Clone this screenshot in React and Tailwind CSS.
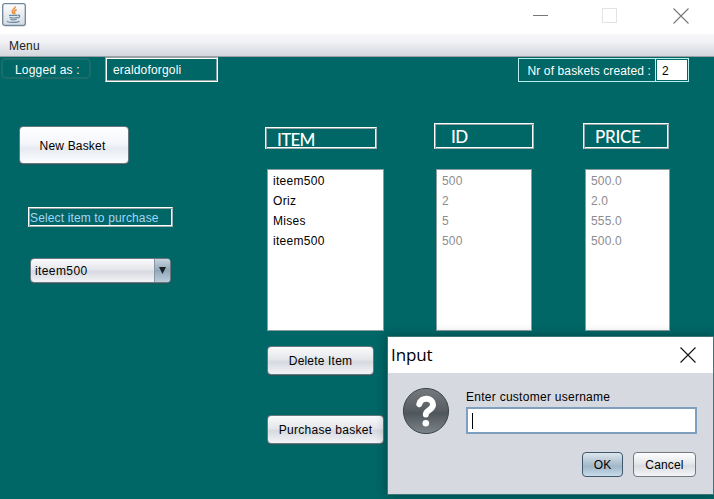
import React from "react";

function JavaIcon() {
  return (
    <svg width="24" height="24" viewBox="0 0 24 24">
      <defs>
        <linearGradient id="tile" x1="0" y1="0" x2="0" y2="1">
          <stop offset="0" stopColor="#fdfdfe" />
          <stop offset="1" stopColor="#d3dbe3" />
        </linearGradient>
      </defs>
      <rect x="0.7" y="0.7" width="22.6" height="21.8" rx="2" fill="url(#tile)" stroke="#71869a" strokeWidth="1.3" />
      <path d="M13.200 3.400c.6 2.400-3.400 3-3 5.200.1 1 .9 1.600 1.500 2.500M14.700 6.800c-1.600.6-2.800 1.400-2.300 2.600.3.700.7 1 .3 1.900" fill="none" stroke="#ec8f3c" strokeWidth="1.500" />
      <path d="M7 12.300h8.500M7.500 14.200c2 .8 6 .8 8 0M8.300 16.200c2 .7 4.600.7 6.400 0M15.800 12.200c2.600-.6 2.600 2.200-.3 3M5.500 18c-1.500 1.700 10 1.800 12 .2" fill="none" stroke="#6c879f" strokeWidth="1.200" />
    </svg>
  );
}

function Cross({ color }) {
  return (
    <svg width="16" height="16" viewBox="0 0 16 16" className="block">
      <path d="M0.500 0.500L15.500 15.500M15.500 0.500L0.500 15.500" stroke={color} strokeWidth="1.100" />
    </svg>
  );
}

const etched =
  "border border-t-[#8fa3a6] border-l-[#8fa3a6] border-r-white border-b-white shadow-[inset_1px_1px_0_#fff,inset_-1px_-1px_0_#8fa3a6]";
const raised =
  "border border-t-white border-l-white border-r-[#a3b0b3] border-b-[#a3b0b3] shadow-[inset_1px_1px_0_#8fa3a6,inset_-1px_-1px_0_#fff]";

function Column({ title, rows, className, head, list, text }) {
  return (
    <div className={`flex flex-col ${className}`}>
      <div className={`${raised} font-[Lato,sans-serif] text-[17px] font-medium text-white ${head}`}>
        {title}
      </div>
      <div className={`h-[162px] border border-[#8a9c9f] bg-white pt-px pl-[5px] ${list} ${text}`}>
        {rows.map((r, i) => (
          <div key={i} className="h-5 leading-5">{r}</div>
        ))}
      </div>
    </div>
  );
}

const button =
  "flex items-center justify-center rounded-[4px] border border-[#69777e] whitespace-nowrap text-black shadow-[0_1px_0_#24595c]";
const silver = "bg-[linear-gradient(#fafafc,#e6e7eb_45%,#d6d9df_55%,#f3f4f7)]";

export default function App() {
  return (
    <div className="relative flex h-[499px] w-[714px] flex-col overflow-hidden bg-[#006666] font-['Liberation_Sans',Arial,sans-serif] text-[12px] tracking-[0.18px]">
      <header className="flex h-[34px] shrink-0 bg-white pt-[3px] pl-[2px]">
        <JavaIcon />
        <div className="ml-auto flex h-[25px] items-center pr-[25px]">
          <div className="h-px w-[15px] bg-[#777]" />
          <div className="ml-[54px] h-[15px] w-[15px] border border-[#e3e3e3]" />
          <div className="ml-[56px]"><Cross color="#777" /></div>
        </div>
      </header>
      <nav className="h-[23px] shrink-0 border-b border-[#9b9fa5] bg-[linear-gradient(#f8f8fa,#f1f2f5_35%,#d3d6dc)] pl-[9px] leading-[24px] text-[#222]">
        Menu
      </nav>

      <div className="flex h-[26px] shrink-0 items-start text-white">
        <div className="mt-px ml-px h-[21px] w-[90px] rounded-[5px] border-2 border-[#1b6d6c] pl-3 leading-[20px]">Logged as :</div>
        <div className={`${etched} ml-[14px] h-[25px] w-[113px] pl-[7px] leading-[24px]`}>eraldoforgoli</div>
        <div className="mt-px ml-auto flex h-6 w-[138px] justify-end border border-[#b5efea] pr-1 leading-[24px] tracking-[0.12px] whitespace-nowrap">Nr of baskets created :</div>
        <div className="mt-px mr-[25px] h-6 w-[33px] border border-l-0 border-[#b5efea] p-px">
          <div className="h-full bg-white pl-[5px] leading-[22px] text-black">2</div>
        </div>
      </div>

      <main className="flex">
        <section className="flex w-[265px] flex-col items-start pt-[43px]">
          <button className={`${button} ml-[19px] h-[38px] w-[110px] bg-[linear-gradient(#fff,#f4f6fa_45%,#e7ebf1_60%,#fcfdff)] pt-px pr-[3px]`}>New Basket</button>
          <div className={`${raised} mt-[43px] ml-[28px] h-5 w-[145px] pl-px leading-[20px] tracking-[0.14px] whitespace-nowrap text-[#a9d3f5]`}>Select item to purchase</div>
          <div className={`${button} ${silver} mt-[31px] ml-[30px] h-[25px] w-[141px] overflow-hidden`}>
            <span className="flex-1 pt-px pl-1 tracking-[0.4px]">iteem500</span>
            <span className="flex h-full w-[16px] items-center justify-center border-l border-[#8797a5] bg-[linear-gradient(#c9d3dd,#91a7b9_50%,#bccddb)]">
              <svg width="7" height="7" viewBox="0 0 7 7"><path d="M0 0h7L3.500 7z" fill="#1c2024" /></svg>
            </span>
          </div>
        </section>
        <div className="flex flex-col">
          <div className="flex">
            <Column title="ITEM" rows={["iteem500", "Oriz", "Mises", "iteem500"]} className="w-[169px] pt-[44px]" head="h-[22px] w-[112px] pl-[11px] leading-[23px] tracking-[-0.7px]" list="mt-[20px] ml-[2px] w-[117px]" text="text-black tracking-[0.3px]" />
            <Column title="ID" rows={["500", "2", "5", "500"]} className="w-[149px] pt-[40px]" head="h-[26px] w-[100px] pl-[16px] leading-[26px] tracking-[-0.7px]" list="mt-[20px] ml-[2px] w-[96px]" text="text-[#8d8d8f]" />
            <Column title="PRICE" rows={["500.0", "2.0", "555.0", "500.0"]} className="w-[90px] pt-[40px]" head="h-[26px] w-[86px] pl-[11px] leading-[26px] tracking-[-0.3px]" list="mt-[20px] ml-[2px] w-[85px]" text="text-[#8d8d8f]" />
          </div>
          <button className={`${button} ${silver} mt-[15px] ml-[2px] h-[29px] w-[107px] pt-px`}>Delete Item</button>
          <button className={`${button} ${silver} mt-[40px] ml-[2px] h-[29px] w-[117px] pt-px tracking-[0.28px]`}>Purchase basket</button>
        </div>
      </main>

      <div role="dialog" className="absolute top-[336px] left-[387px] flex h-[159px] w-[327px] flex-col border border-[#3c7776] bg-[#d6d9df] text-black shadow-[0_0_10px_rgba(0,30,30,0.45)]">
        <div className="flex h-[36px] items-center justify-between bg-white pr-[17px] pl-[3px]">
          <span className="font-['Open_Sans',sans-serif] text-[17px] tracking-[-0.1px]">Input</span>
          <Cross color="#111" />
        </div>
        <div className="flex pt-[14px] pl-[14px]">
          <svg width="48" height="48" viewBox="0 0 48 48">
            <defs>
              <linearGradient id="disc" x1="0" y1="0" x2="0" y2="1">
                <stop offset="0" stopColor="#74797d" />
                <stop offset="0.450" stopColor="#5a6065" />
                <stop offset="0.550" stopColor="#50575c" />
                <stop offset="1" stopColor="#7c858b" />
              </linearGradient>
            </defs>
            <circle cx="24" cy="24" r="22.600" fill="url(#disc)" stroke="#3f464a" />
            <path d="M17.300 17.200c1.800-8 13.700-6.800 13.700.6 0 5.200-7.200 5-7.200 9.700" fill="none" stroke="#fff" strokeWidth="6" strokeLinecap="round" />
            <circle cx="23.800" cy="36.300" r="3.300" fill="#fff" />
          </svg>
          <div className="ml-[16px] flex flex-col pt-[2px]">
            <label className="h-[18px] leading-[16px] tracking-[0.27px]">Enter customer username</label>
            <div className="h-[27px] w-[231px] border-2 border-[#7f9fbf] bg-white pt-[4px] pl-[4px]">
              <div className="h-4 w-px bg-black" />
            </div>
          </div>
        </div>
        <div className="mt-[17px] flex justify-end gap-[10px] pr-[17px]">
          <button className="h-[25px] w-[41px] rounded-[4px] border border-[#3f586b] bg-[linear-gradient(#dce6ee,#a9bdcc_50%,#a1b8c9_60%,#c8dceb)] pt-px">OK</button>
          <button className="h-[25px] w-[63px] rounded-[4px] border border-[#737980] bg-[linear-gradient(#fdfdfe,#e6e8eb_45%,#d9dce1_55%,#f4f5f7)] pt-px">Cancel</button>
        </div>
      </div>
    </div>
  );
}
